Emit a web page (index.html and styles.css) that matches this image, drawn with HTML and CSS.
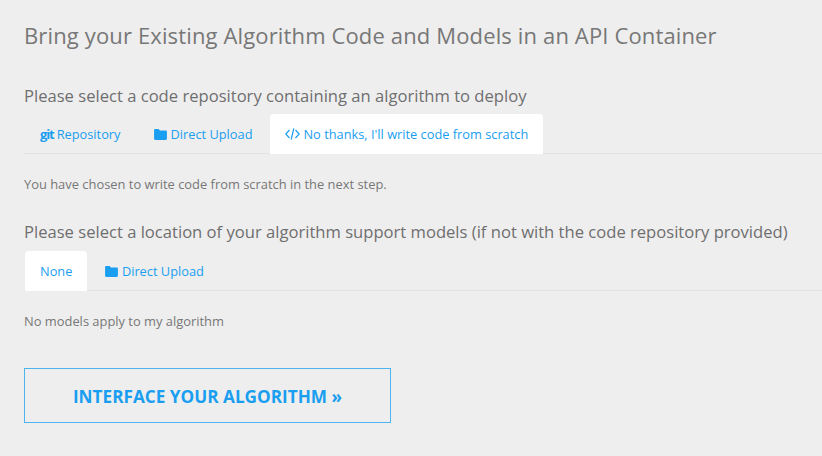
FILE: index.html
```html
<!DOCTYPE html>
<html lang="en">
<head>
    <meta charset="UTF-8">
    <title>Bring your Existing Algorithm</title>
    <link rel="stylesheet" href="styles.css">
</head>
<body>
    <div class="container">
        <h2>Bring your Existing Algorithm Code and Models in an API Container</h2>

        <h4 class="first-label">Please select a code repository containing an algorithm to deploy</h4>
        <ul class="tabs">
            <li><a href="#"><span class="git">git</span> Repository</a></li>
            <li>
                <a href="#">
                    <svg class="folder" viewBox="0 0 14 12"><path d="M1.3 0H5l1.3 1.7h6.4c.7 0 1.3.6 1.3 1.3v7.7c0 .7-.6 1.3-1.3 1.3H1.3C.6 12 0 11.4 0 10.7V1.3C0 .6.6 0 1.3 0z"/></svg>
                    Direct Upload
                </a>
            </li>
            <li class="active">
                <a href="#">
                    <svg class="code" viewBox="0 0 15 12"><path d="M4.5 2 .8 6l3.7 4M10.500 2l3.700 4-3.700 4M8.800 .5 6.200 11.500"/></svg>
                    No thanks, I'll write code from scratch
                </a>
            </li>
        </ul>
        <p class="tab-text">You have chosen to write code from scratch in the next step.</p>

        <h4 class="second-label">Please select a location of your algorithm support models (if not with the code repository provided)</h4>
        <ul class="tabs model-tabs">
            <li class="active"><a href="#">None</a></li>
            <li>
                <a href="#">
                    <svg class="folder" viewBox="0 0 14 12"><path d="M1.3 0H5l1.3 1.7h6.4c.7 0 1.3.6 1.3 1.3v7.7c0 .7-.6 1.3-1.3 1.3H1.3C.6 12 0 11.4 0 10.7V1.3C0 .6.6 0 1.3 0z"/></svg>
                    Direct Upload
                </a>
            </li>
        </ul>
        <p class="tab-text">No models apply to my algorithm</p>

        <a class="next-button" href="#">INTERFACE YOUR ALGORITHM »</a>
    </div>
</body>
</html>
```

FILE: styles.css
```css
body {
    margin: 0;
    background-color: #eeeeee;
    color: #777777;
    font-family: "Open Sans", sans-serif;
    font-size: 13px;
}
.container {
    padding: 21px 0 0 24px;
}
h2 {
    margin: 0;
    font-size: 22px;
    line-height: 28px;
    font-weight: 400;
    letter-spacing: .14px;
}
h4 {
    margin: 0;
    font-size: 16.6px;
    line-height: 24px;
    font-weight: 400;
    color: #6f6f6f;
}
.first-label {
    margin-top: 35px;
}
.second-label {
    margin-top: 27px;
}
.tabs {
    display: flex;
    gap: 3px;
    list-style-type: none;
    margin: 6px 0 0;
    padding: 0 0 0 1px;
    height: 39px;
    border-bottom: 1px solid #e2e2e2;
}
.model-tabs {
    margin-top: 7px;
}
.tabs li {
    height: 40px;
}
.tabs a {
    display: flex;
    align-items: center;
    gap: 4px;
    height: 100%;
    padding: 0 15px;
    color: #1a9ef0;
    font-size: 12.8px;
    text-decoration: none;
    box-sizing: border-box;
}
.tabs .active a {
    background-color: white;
    border-radius: 4px 4px 0 0;
    padding-right: 14.5px;
}
.git {
    font-weight: 700;
    font-size: 13px;
    letter-spacing: -1.1px;
    margin-right: -1px;
}
.folder {
    width: 13px;
    height: 11px;
    fill: #1a9ef0;
}
.code {
    width: 15px;
    height: 12px;
    fill: none;
    stroke: #1a9ef0;
    stroke-width: 1.2;
    margin-right: -1px;
}
.tab-text {
    margin: 21px 0 0;
    font-size: 12.9px;
    line-height: 18px;
}
.next-button {
    display: flex;
    align-items: center;
    justify-content: center;
    box-sizing: border-box;
    width: 367px;
    height: 55px;
    margin-top: 38px;
    padding-top: 2px;
    border: 1px solid #4db4f2;
    color: #1a9ef0;
    font-size: 17.2px;
    font-weight: 700;
    text-decoration: none;
}
```
